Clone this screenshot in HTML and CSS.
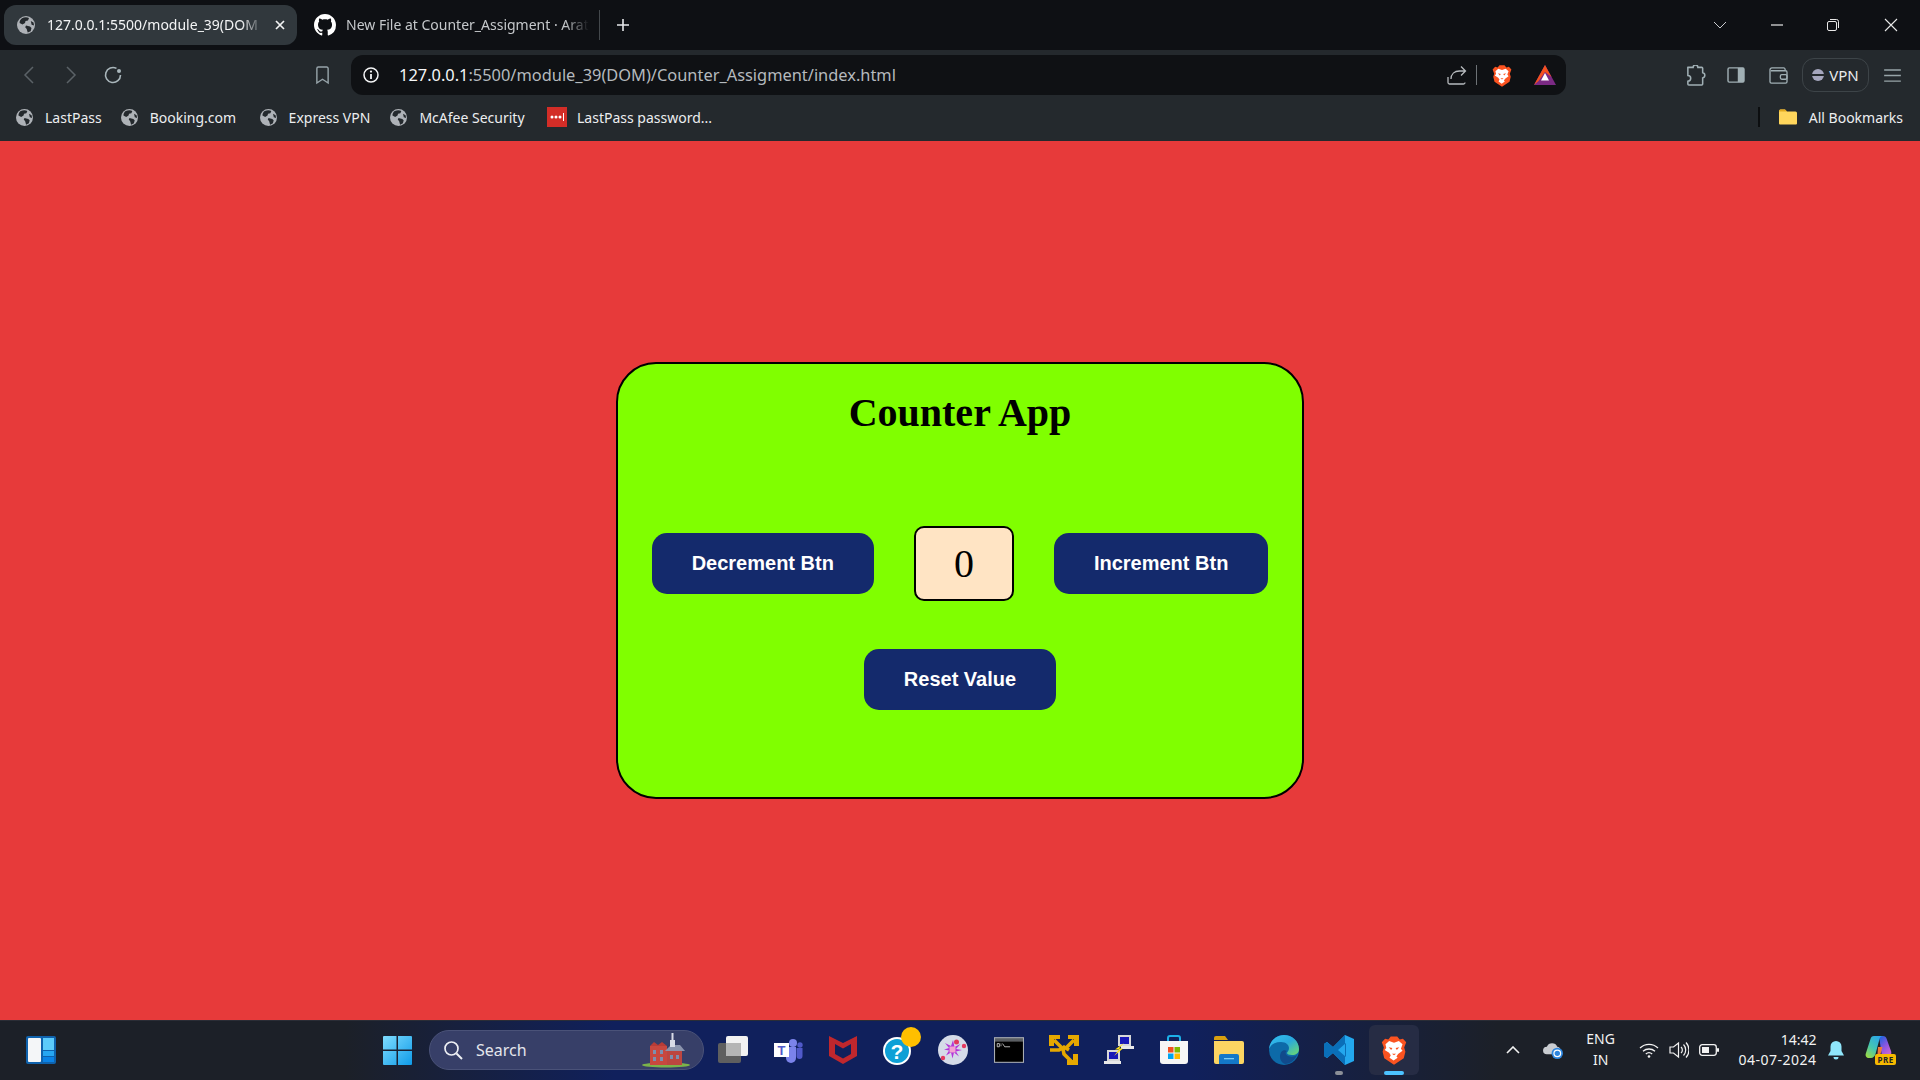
FILE: index.html
```html
<!DOCTYPE html>
<html lang="en">
<head>
<meta charset="utf-8">
<title>Counter App</title>
<link rel="stylesheet" href="styles.css">
</head>
<body>
<svg class="defs" width="0" height="0" aria-hidden="true">
  <symbol id="globe" viewBox="0 0 18 18">
    <circle cx="9" cy="9" r="9" fill="#aeb2b7"/>
    <path d="M5 2.2C7 1.2 10 1 12 2l-1 2.400-2.500.6-.5 2-2.500 1.500L2.600 7C2.500 5 3.500 3.200 5 2.200zM9 9.500l4 1 1.500 1.500-.8 3.200-3 1.400-1-3.600-1.500-1.800zM13.800 5l2.700 1.500.6 3-2.500-.8z" fill="#24292d"/>
  </symbol>
  <symbol id="brave" viewBox="0 0 32 36">
    <path d="M16 36 4 28 2 20 3.500 15 1 8.500 5 4 9 5 12 1.500h8L23 5l4-1 4 4.500L28.500 15 30 20l-2 8z" fill="#fb5320"/>
    <path d="M5.500 11 10 7l6 2 6-2 4.500 4-2 5.500 2 2.500-5.500 4-2 3 1.500 1.500-5 3.500-5-3.500L12 24.500l-2-3-5.500-3.500 2-2.500z" fill="#fff"/>
    <path d="M9.500 14.500l4.500 1-1.500 2.500zM22.500 14.500l-4.500 1 1.500 2.500zM13.500 22.500h5l-2.500 2z" fill="#fb5320"/>
  </symbol>
</svg>

<header class="browser">
  <div class="tabstrip">
    <div class="tab tab-active">
      <svg class="ic18"><use href="#globe"/></svg>
      <span class="tab-title">127.0.0.1:5500/module_39(DOM</span>
      <svg class="tab-close" viewBox="0 0 10 10"><path d="M1 1l8 8M9 1l-8 8" stroke="#f2f3f4" stroke-width="1.700" fill="none"/></svg>
    </div>
    <div class="tab tab-idle">
      <svg class="ic22" viewBox="0 0 16 16"><path fill="#fff" d="M8 0C3.580 0 0 3.580 0 8c0 3.540 2.290 6.530 5.470 7.590.4.070.55-.17.55-.38 0-.19-.01-.82-.01-1.490-2.010.37-2.530-.49-2.690-.94-.09-.23-.48-.94-.82-1.130-.28-.15-.68-.52-.01-.53.63-.01 1.080.58 1.230.82.720 1.210 1.870.870 2.330.66.070-.52.280-.870.510-1.070-1.780-.2-3.640-.89-3.640-3.950 0-.870.310-1.590.820-2.150-.08-.2-.36-1.020.08-2.120 0 0 .67-.21 2.200.82.640-.18 1.320-.27 2-.27s1.360.09 2 .27c1.530-1.040 2.200-.82 2.200-.82.440 1.100.160 1.920.080 2.120.51.560.820 1.270.820 2.150 0 3.070-1.870 3.750-3.650 3.950.290.250.540.730.540 1.480 0 1.070-.01 1.930-.01 2.200 0 .210.150.460.550.380A8.010 8.010 0 0 0 16 8c0-4.420-3.580-8-8-8z"/></svg>
      <span class="tab-title tab-title-dim">New File at Counter_Assigment · Arat</span>
    </div>
    <span class="tab-divider"></span>
    <svg class="newtab" viewBox="0 0 14 14"><path d="M7 1v12M1 7h12" stroke="#e6e8ea" stroke-width="1.600"/></svg>
    <span class="grow"></span>
    <div class="winctl">
      <svg viewBox="0 0 14 14" class="ic14 ctl-chevron"><path d="M1 4l6 6 6-6" stroke="#c9cccf" fill="none"/></svg>
      <svg viewBox="0 0 14 14" class="ic14 ctl-min"><path d="M1 7h12" stroke="#e8e8e8" stroke-width="1.200"/></svg>
      <svg viewBox="0 0 14 14" class="ic14 ctl-max"><rect x="1.500" y="3.500" width="9" height="9" rx="1.500" stroke="#e8e8e8" fill="none"/><path d="M4 1.500h6.500a2 2 0 0 1 2 2V10" stroke="#e8e8e8" fill="none"/></svg>
      <svg viewBox="0 0 14 14" class="ic14 ctl-close"><path d="M1 1l12 12M13 1L1 13" stroke="#e8e8e8" stroke-width="1.100"/></svg>
    </div>
  </div>

  <div class="toolbar">
    <svg class="tb tb-back" viewBox="0 0 12 20"><path d="M10 2 2 10l8 8" stroke="#5b6267" stroke-width="1.500" fill="none"/></svg>
    <svg class="tb tb-fwd" viewBox="0 0 12 20"><path d="M2 2l8 8-8 8" stroke="#5b6267" stroke-width="1.500" fill="none"/></svg>
    <svg class="tb tb-reload" viewBox="0 0 20 20"><path d="M17.500 10A7.500 7.500 0 1 1 13.500 3.400" stroke="#a9b6bb" stroke-width="1.600" fill="none"/><circle cx="16" cy="6" r="2" fill="#a9b6bb"/></svg>
    <svg class="tb tb-mark" viewBox="0 0 16 20"><path d="M2 2.500A1.500 1.500 0 0 1 3.500 1h9A1.500 1.500 0 0 1 14 2.500V18l-6-4-6 4z" stroke="#97a4aa" stroke-width="1.500" fill="none"/></svg>
    <div class="omnibox">
      <svg class="ic16 omni-info" viewBox="0 0 16 16"><circle cx="8" cy="8" r="7" stroke="#f4f5f6" stroke-width="1.500" fill="none"/><path d="M8 7v5" stroke="#f4f5f6" stroke-width="1.800"/><circle cx="8" cy="4.600" r="1.100" fill="#f4f5f6"/></svg>
      <span class="url"><b>127.0.0.1</b>:5500/module_39(DOM)/Counter_Assigment/index.html</span>
      <span class="grow"></span>
      <svg class="omni-share" viewBox="0 0 20 20"><path d="M1 12v5.500A1.500 1.500 0 0 0 2.500 19h14a1.500 1.500 0 0 0 1.500-1.500M4 14c0-5 3.500-8 8.500-8h5.500M14 1.500 18.500 6 14 10.500" stroke="#b7bbbe" stroke-width="1.300" fill="none"/></svg>
      <span class="omni-sep"></span>
      <svg class="omni-brave"><use href="#brave"/></svg>
      <svg class="omni-bat" viewBox="0 0 22 20"><path d="M11 0 22 20H0z" fill="#7b2a84"/><path d="M11 0 17.500 12 11 7 4.500 16 0 20z" fill="#f4511e"/><path d="M11 0 22 20l-4.500-8z" fill="#a21f7a"/><path d="M11 8l4 7.500H7z" fill="#fff"/></svg>
    </div>
    <svg class="tb-r tb-ext" viewBox="0 0 22 22"><path d="M3 2.500h5.500a2.500 2.500 0 0 1 5 0H17.500a1 1 0 0 1 1 1V8a2.800 2.800 0 0 1 0 5.500V20a1 1 0 0 1-1 1H4a1 1 0 0 1-1-1v-3a3 3 0 0 0 0-6V3.500a1 1 0 0 1 0-1z" stroke="#a0afb4" stroke-width="1.600" fill="none"/></svg>
    <svg class="tb-r tb-side" viewBox="0 0 20 18"><rect x="1" y="1" width="18" height="16" rx="1.500" stroke="#a0afb4" stroke-width="1.600" fill="none"/><rect x="12" y="1" width="7" height="16" fill="#a0afb4"/></svg>
    <svg class="tb-r tb-wallet" viewBox="0 0 20 18"><path d="M17 4V2.500A1.500 1.500 0 0 0 15.500 1H3a2 2 0 0 0-2 2v12.500A1.500 1.500 0 0 0 2.500 17h15a1.500 1.500 0 0 0 1.500-1.500v-10A1.500 1.500 0 0 0 17.500 4H2" stroke="#a0afb4" stroke-width="1.400" fill="none"/><rect x="12" y="8" width="7" height="5" rx="1.500" stroke="#a0afb4" stroke-width="1.400" fill="none"/></svg>
    <div class="vpn"><span class="vpn-dot"></span><span>VPN</span></div>
    <svg class="tb-r tb-menu" viewBox="0 0 18 14"><path d="M0 1h18M0 7h18M0 13h18" stroke="#97a4a8" stroke-width="1.500"/></svg>
  </div>

  <nav class="bookmarks">
    <a class="bm bm-a"><svg class="ic15"><use href="#globe"/></svg>LastPass</a>
    <a class="bm bm-b"><svg class="ic15"><use href="#globe"/></svg>Booking.com</a>
    <a class="bm bm-c"><svg class="ic15"><use href="#globe"/></svg>Express VPN</a>
    <a class="bm bm-d"><svg class="ic15"><use href="#globe"/></svg>McAfee Security</a>
    <a class="bm bm-e"><svg class="lp" viewBox="0 0 20 20"><rect width="20" height="20" fill="#d32d27"/><circle cx="5" cy="10" r="1.500" fill="#fff"/><circle cx="9" cy="10" r="1.500" fill="#fff"/><circle cx="13" cy="10" r="1.500" fill="#fff"/><rect x="16" y="6" width="1" height="8" fill="#fff"/></svg>LastPass password...</a>
    <span class="grow"></span>
    <span class="bm-sep"></span>
    <a class="bm bm-all"><svg class="folder" viewBox="0 0 20 16"><path d="M1 2a1.500 1.500 0 0 1 1.500-1.500H7L9 2.500h8.500A1.500 1.500 0 0 1 19 4v10.500a1 1 0 0 1-1 1H2a1 1 0 0 1-1-1z" fill="#ffd65c"/><path d="M1 2a1.500 1.500 0 0 1 1.500-1.500H7L9 2.500H1z" fill="#e3a91e"/></svg>All Bookmarks</a>
  </nav>
</header>

<main class="page">
  <section class="card">
    <h1 class="card-title">Counter App</h1>
    <div class="counter-row">
      <button class="btn">Decrement Btn</button>
      <div class="count">0</div>
      <button class="btn">Increment Btn</button>
    </div>
    <button class="btn btn-reset">Reset Value</button>
  </section>
</main>

<footer class="taskbar">
  <svg class="widgets" viewBox="0 0 30 28"><rect width="30" height="28" rx="2" fill="#0f62ad"/><rect x="2" y="2" width="13" height="24" rx="1" fill="#f4f6f8"/><rect x="17" y="2" width="11" height="12" fill="#5ccbfb"/><rect x="17" y="15" width="11" height="5" fill="#27a7f2"/><rect x="17" y="21" width="11" height="5" fill="#0b83e6"/></svg>
  <div class="tb-center">
    <svg class="winlogo" viewBox="0 0 29 29"><defs><linearGradient id="wg" x1="0" y1="0" x2="1" y2="1"><stop offset="0" stop-color="#7fdcff"/><stop offset="1" stop-color="#0f9be8"/></linearGradient></defs><path d="M0 1a1 1 0 0 1 1-1h12.500v13.500H0zM15 0h13a1 1 0 0 1 1 1v12.500H15zM0 15h13.500v14H1a1 1 0 0 1-1-1zM15 15h14v13a1 1 0 0 1-1 1H15z" fill="url(#wg)"/></svg>
    <div class="search">
      <svg class="search-ic" viewBox="0 0 20 20"><circle cx="8.500" cy="8.500" r="6.500" stroke="#eef0f4" stroke-width="1.700" fill="none"/><path d="M13.500 13.500 19 19" stroke="#eef0f4" stroke-width="1.900"/></svg>
      <span class="search-text">Search</span>
      <span class="grow"></span>
      <svg class="search-art" viewBox="0 0 50 36"><ellipse cx="25" cy="33" rx="24" ry="2.500" fill="#7bb34a"/><rect x="9" y="14" width="17" height="19" fill="#c8483f"/><path d="M9 14l4-4 4 3 4-3 5 4z" fill="#b83c36"/><rect x="26" y="19" width="15" height="14" fill="#bc4640"/><path d="M24 19l6-6h9l5 6z" fill="#8b94ad"/><rect x="29" y="8" width="5" height="7" fill="#d8dbe6"/><path d="M31.500 1v8" stroke="#d8dbe6" stroke-width="2"/><g fill="#7c8fb0"><rect x="12" y="18" width="3" height="4"/><rect x="19" y="18" width="3" height="4"/><rect x="12" y="25" width="3" height="4"/><rect x="19" y="25" width="3" height="4"/><rect x="29" y="23" width="3" height="4"/><rect x="35" y="23" width="3" height="4"/></g></svg>
    </div>
    <div class="apps">
      <div class="app"><svg class="i30" viewBox="0 0 30 30"><rect x="0" y="8" width="23" height="20" rx="2" fill="#5f5f5f"/><rect x="8" y="1" width="22" height="20" rx="2" fill="#f2f2f2"/><rect x="8" y="8" width="15" height="13" fill="#b5b5b5"/></svg></div>
      <div class="app"><svg class="i30" viewBox="0 0 30 30"><circle cx="20" cy="8" r="4" fill="#7b83eb"/><circle cx="27" cy="10" r="2.700" fill="#5059c9"/><path d="M13 12h10v11a5 5 0 0 1-10 0z" fill="#7b83eb"/><path d="M23.500 13h6v8a3 3 0 0 1-6 0z" fill="#5059c9"/><rect x="1" y="8" width="15" height="14" fill="#fff"/><text class="t-t" x="8.500" y="20">T</text></svg></div>
      <div class="app"><svg class="i30" viewBox="0 0 30 30"><path d="M1 1l14 7 14-7v20l-14 8-14-8zM7 9v10l8 4.500 8-4.500V9l-8 4.500z" fill="#c0272d" fill-rule="evenodd"/></svg></div>
      <div class="app"><svg class="i30" viewBox="0 0 30 30"><circle cx="14" cy="16" r="14" fill="#fff"/><circle cx="14" cy="16" r="12" fill="#0ea0d6"/><text class="t-q" x="14" y="24">?</text></svg><span class="badge"></span></div>
      <div class="app"><svg class="i30" viewBox="0 0 30 30"><ellipse cx="15" cy="15" rx="15" ry="15" fill="#d5dbe8"/><path d="M15 5l1.500 7 6-3-4.500 5 6 1-6 1.500 3 5-5-4-1.500 6-1.500-6-5 3 3-5-5-1 5-1.500-4-5 6 3z" fill="#b436d8"/><rect x="11.500" y="11.500" width="6" height="6" fill="#f3a2d2"/><circle cx="18.500" cy="7" r="2.500" fill="#e33a5f"/><circle cx="26" cy="11" r="2.200" fill="#e33a5f"/><circle cx="5" cy="23" r="2.200" fill="#e33a5f"/></svg></div>
      <div class="app"><svg class="i30" viewBox="0 0 28 24"><rect width="28" height="24" fill="#a9adb2"/><rect x="1" y="1" width="26" height="3" fill="#5a5e63"/><rect x="1" y="4" width="26" height="19" fill="#000"/><path d="M3 6h2v3H3zM6 6.500h1M6 8h1M8 6l2 3h5" stroke="#cfcfcf" stroke-width=".8" fill="none"/></svg></div>
      <div class="app"><svg class="i30" viewBox="0 0 30 30"><path d="M0 0h11v4H5v7H0zM19 0h11v11h-5V4h-6zM18 30h11V19h-5v6h-6z" fill="#e6a800"/><path d="M5 5l7 7M25 5l-7 7M1 15h9l5-3 5 3M14 14l1 5 8 8" stroke="#e6a800" stroke-width="3.600" fill="none"/></svg></div>
      <div class="app"><svg class="i30" viewBox="0 0 30 30"><rect x="14" y="0" width="13" height="11" fill="#d8d8d8"/><rect x="16" y="2" width="9" height="7" fill="#1818b8"/><rect x="17" y="11" width="13" height="3" fill="#e8e8e8"/><rect x="3" y="15" width="13" height="11" fill="#d8d8d8"/><rect x="5" y="17" width="9" height="7" fill="#1818b8"/><rect x="0" y="26" width="17" height="3" fill="#e8e8e8"/><path d="M20 8l-9 6.500h4L10 21l9-7.500h-4z" fill="#ffe11a"/></svg></div>
      <div class="app"><svg class="i30" viewBox="0 0 30 30"><path d="M9 6V3a2 2 0 0 1 2-2h8a2 2 0 0 1 2 2v3" stroke="#1cb0e8" stroke-width="2" fill="none"/><path d="M1 6h28v20a3 3 0 0 1-3 3H4a3 3 0 0 1-3-3z" fill="#f6f6f6"/><rect x="9" y="12" width="5.500" height="5.500" fill="#f25022"/><rect x="15.500" y="12" width="5.500" height="5.500" fill="#7fba00"/><rect x="9" y="18.500" width="5.500" height="5.500" fill="#00a4ef"/><rect x="15.500" y="18.500" width="5.500" height="5.500" fill="#ffb900"/></svg></div>
      <div class="app"><svg class="i30" viewBox="0 0 30 28"><path d="M0 2a2 2 0 0 1 2-2h9l3 4H0z" fill="#d9a00f"/><path d="M0 5h28a2 2 0 0 1 2 2v19a2 2 0 0 1-2 2H2a2 2 0 0 1-2-2z" fill="#fcd562"/><path d="M5 20a2 2 0 0 1 2-2h16a2 2 0 0 1 2 2v8H5z" fill="#1478c8"/><rect x="10" y="22" width="10" height="1.300" fill="#7ccdf5"/></svg></div>
      <div class="app"><svg class="i30" viewBox="0 0 30 30"><defs><linearGradient id="eg" x1="0" y1="0" x2="1" y2="1"><stop offset="0" stop-color="#35c1f1"/><stop offset=".5" stop-color="#2aa8dd"/><stop offset="1" stop-color="#6fdc6b"/></linearGradient></defs><circle cx="15" cy="15" r="15" fill="#0d6aa8"/><path d="M0 14C1 5 8 0 15 0c8 0 15 6 15 14 0 4-3 6-7 6-3 0-5-1-5-2 0-1 2-2 2-5 0-3-3-6-8-6C6 7 2 9 0 14z" fill="url(#eg)"/><path d="M11 22c0-5 3-8 7-6-2 1-2 3 1 5 3 1 6 1 9-1-2 5-7 9-12 9-3-1-5-4-5-7z" fill="#114a8b"/></svg></div>
      <div class="app app-dot"><svg class="i30" viewBox="0 0 30 30"><path d="M21 0l9 4v22l-9 4L9 18l-6 5-3-2v-12l3-2 6 5z" fill="#23a8ee"/><path d="M21 0 9 12 3 7 0 9v12l3 2 6-5 12 12zM22 8l-8 7 8 7z" fill="#0a6fb8" fill-rule="evenodd"/></svg></div>
      <div class="app app-active"><svg class="i30 brave-big"><use href="#brave"/></svg></div>
    </div>
  </div>
  <div class="tray">
    <svg class="tr tr-up" viewBox="0 0 14 8"><path d="M1 7l6-6 6 6" stroke="#f2f2f2" stroke-width="1.600" fill="none"/></svg>
    <svg class="tr tr-cloud" viewBox="0 0 22 20"><path d="M4 14a4 4 0 0 1 0-8 6 6 0 0 1 11 0 4 4 0 0 1 3 2v6z" fill="#c9ccd1"/><circle cx="15" cy="13" r="6" fill="#2d86e0"/><circle cx="15" cy="13" r="3.500" fill="none" stroke="#fff" stroke-width="1.300"/></svg>
    <div class="lang"><span>ENG</span><span>IN</span></div>
    <svg class="tr tr-wifi" viewBox="0 0 20 15"><path d="M1 5a13 13 0 0 1 18 0M4 8.300a9 9 0 0 1 12 0M6.800 11a5 5 0 0 1 6.400 0" stroke="#f2f2f2" stroke-width="1.300" fill="none"/><circle cx="10" cy="13.500" r="1.300" fill="#f2f2f2"/></svg>
    <svg class="tr tr-vol" viewBox="0 0 20 18"><path d="M1 6h3.500L9.500 2v14l-5-4H1z" stroke="#f2f2f2" stroke-width="1.200" fill="none"/><path d="M12 6a4 4 0 0 1 0 6M14.500 3.500a8 8 0 0 1 0 11M17 1.500a11 11 0 0 1 0 15" stroke="#f2f2f2" stroke-width="1.200" fill="none"/></svg>
    <svg class="tr tr-bat" viewBox="0 0 20 12"><rect x=".7" y=".7" width="16.600" height="10.600" rx="2.500" stroke="#f2f2f2" stroke-width="1.300" fill="none"/><rect x="3" y="3" width="7" height="6" fill="#f2f2f2"/><rect x="18" y="4" width="2" height="4" rx="1" fill="#f2f2f2"/></svg>
    <div class="clock"><span>14:42</span><span class="date">04-07-2024</span></div>
    <svg class="tr tr-bell" viewBox="0 0 16 19"><path d="M8 0a5.500 5.500 0 0 1 5.500 5.500V10l2.500 4.500H0L2.500 10V5.500A5.500 5.500 0 0 1 8 0zM5.500 16h5a2.500 2.500 0 0 1-5 0z" fill="#8fe6fb"/></svg>
    <div class="copilot">
      <svg class="cop" viewBox="0 0 28 24"><defs><linearGradient id="cga" x1="0.800" y1="0" x2="0.100" y2="1"><stop offset="0" stop-color="#2aa5ec"/><stop offset=".55" stop-color="#45c6b0"/><stop offset="1" stop-color="#9fdc3f"/></linearGradient><linearGradient id="cgb" x1="0.200" y1="0" x2="0.800" y2="1"><stop offset="0" stop-color="#2461dd"/><stop offset=".5" stop-color="#8f56e0"/><stop offset="1" stop-color="#d866d0"/></linearGradient></defs><path d="M14 1h4c2 0 3 1 3.500 2.500L26 16c1 3-.5 6-3 6H17z" fill="url(#cgb)"/><path d="M9 1h9c-2 0-3 1-3.500 3L10.500 19C10 21 8 23 6 23H4C1.500 23 0 21 .8 18.500L5.500 4C6 2 7 1 9 1z" fill="url(#cga)"/><path d="M13 12l4.500 0-2 7c-.5 2-2 4-4.500 4h-1c1.500-1 2-2 2.500-4z" fill="#ef7a3a"/></svg>
      <span class="pre">PRE</span>
    </div>
  </div>
</footer>
</body>
</html>
```
FILE: styles.css
```css
* { box-sizing: border-box; }
html, body { margin: 0; height: 100%; }
body {
  width: 1920px;
  height: 1080px;
  overflow: hidden;
  display: flex;
  flex-direction: column;
  background: #e73a3a;
  font-family: "Noto Sans", "Liberation Sans", sans-serif;
}
.defs { position: absolute; }
.grow { flex: 1; }
svg { display: block; flex: none; }

/* Browser chrome */
.browser { flex: none; color: #e8eaec; }
.tabstrip {
  height: 50px;
  display: flex;
  align-items: center;
  padding-left: 4px;
  background: #0e1014;
}
.tab { display: flex; align-items: center; height: 40px; overflow: hidden; font-size: 14px; }
.tab-active { width: 293px; padding: 0 12px 0 13px; background: #31383d; border-radius: 12px; color: #f3f4f5; }
.tab-idle { width: 302px; padding: 0 10px 0 17px; color: #c5c8cb; }
.ic18 { width: 18px; height: 18px; }
.ic22 { width: 22px; height: 22px; }
.ic14 { width: 14px; height: 14px; }
.ic16 { width: 16px; height: 16px; }
.ic15 { width: 17px; height: 17px; }
.tab-title {
  flex: 1;
  margin-left: 12px;
  padding-bottom: 2px;
  white-space: nowrap;
  overflow: hidden;
  -webkit-mask-image: linear-gradient(90deg, #000 90%, transparent 100%);
  mask-image: linear-gradient(90deg, #000 90%, transparent 100%);
}
.tab-title-dim { margin-left: 10px; }
.tab-close { width: 10px; height: 10px; margin-left: 12px; flex: none; }
.tab-divider { width: 1px; height: 30px; background: #43484c; }
.newtab { width: 14px; height: 14px; margin-left: 16px; }
.winctl { display: flex; align-items: center; padding-right: 22px; }
.ctl-min { margin-left: 43px; }
.ctl-max { margin-left: 42px; }
.ctl-close { margin-left: 44px; }

.toolbar { height: 50px; display: flex; align-items: center; background: #24292d; }
.tb-back { width: 12px; height: 20px; margin-left: 23px; }
.tb-fwd { width: 12px; height: 20px; margin-left: 30px; }
.tb-reload { width: 20px; height: 20px; margin-left: 26px; }
.tb-mark { width: 15px; height: 19px; margin-left: 192px; }
.omnibox {
  width: 1215px;
  height: 40px;
  margin-left: 21px;
  display: flex;
  align-items: center;
  padding: 0 10px 0 12px;
  background: #0f1114;
  border-radius: 12px;
}
.url { margin-left: 20px; padding-bottom: 2px; font-size: 16.400px; color: #b5babe; white-space: nowrap; }
.url b { font-weight: 400; color: #f6f7f8; }
.omni-share { width: 20px; height: 20px; }
.omni-sep { width: 1px; height: 20px; margin-left: 9.500px; background: #6d7276; }
.omni-brave { width: 20px; height: 23px; margin-left: 15px; }
.omni-bat { width: 22px; height: 20px; margin-left: 22px; }
.tb-ext { width: 21px; height: 21px; margin-left: 119px; }
.tb-side { width: 18px; height: 16px; margin-left: 21px; }
.tb-wallet { width: 19px; height: 17px; margin-left: 24px; }
.vpn {
  width: 67px;
  height: 34px;
  margin-left: 14px;
  display: flex;
  align-items: center;
  justify-content: center;
  gap: 5px;
  border: 1px solid #3d4448;
  border-radius: 12px;
  font-size: 15px;
  color: #e9ebec;
}
.vpn-dot { width: 12px; height: 12px; border-radius: 50%; background: linear-gradient(#a5a6bd 0 40%, #24292d 40% 60%, #a5a6bd 60%); }
.tb-menu { width: 17px; height: 13px; margin-left: 15px; }

.bookmarks { height: 41px; display: flex; align-items: center; background: #24292d; font-size: 14px; padding: 0 17px 7px 0; }
.bm { display: flex; align-items: center; gap: 12px; white-space: nowrap; color: #eceef0; }
.bm-a { margin-left: 16px; }
.bm-b { margin-left: 19px; }
.bm-c { margin-left: 23.500px; }
.bm-d { margin-left: 20px; }
.bm-e { margin-left: 22.500px; gap: 10px; }
.lp { width: 20px; height: 20px; }
.bm-sep { width: 2px; height: 20px; background: #0c0e10; margin-right: 18px; }
.bm-all { gap: 11px; }
.folder { width: 20px; height: 16px; }

/* Page */
.page { flex: 1; display: flex; align-items: center; justify-content: center; min-height: 0; }
.card {
  width: 688px;
  height: 437px;
  padding-top: 26px;
  display: flex;
  flex-direction: column;
  align-items: center;
  background: #80ff00;
  border: 2px solid #000;
  border-radius: 40px;
  font-family: "Liberation Serif", serif;
}
.card-title { margin: 0; font-size: 40px; font-weight: 700; line-height: 46px; color: #000; }
.counter-row { margin-top: 90px; display: flex; align-items: center; gap: 40px; }
.btn {
  padding: 19px 40px;
  font-family: "Liberation Sans", sans-serif;
  font-size: 20px;
  font-weight: 700;
  line-height: 23px;
  color: #fff;
  background: #142a6c;
  border: 0;
  border-radius: 15px;
}
.btn-reset { margin-top: 48px; }
.count {
  width: 100px;
  height: 75px;
  display: flex;
  align-items: center;
  justify-content: center;
  font-size: 40px;
  background: #ffe4c4;
  border: 2px solid #000;
  border-radius: 10px;
}

/* Taskbar */
.taskbar {
  flex: none;
  height: 60px;
  display: flex;
  align-items: center;
  padding: 0 0 1px 26px;
  border-top: 1px solid #2a2d36;
  background: linear-gradient(90deg, #1c2028 0 18%, #10205c 32% 62%, #1c2028 78%);
  color: #f2f2f2;
}
.widgets { width: 30px; height: 28px; }
.tb-center { display: flex; align-items: center; margin-left: 327px; }
.winlogo { width: 29px; height: 29px; }
.search {
  width: 275px;
  height: 40px;
  margin-left: 17px;
  display: flex;
  align-items: center;
  padding: 0 12px 0 13px;
  background: #373f68;
  border: 1px solid #4a5278;
  border-radius: 20px;
  font-size: 16px;
  color: #e4e6ec;
}
.search-ic { width: 20px; height: 20px; }
.search-text { margin-left: 13px; }
.search-art { width: 50px; height: 36px; }
.apps { display: flex; align-items: center; margin-left: 1.500px; }
.app { position: relative; width: 55.100px; height: 50px; display: flex; align-items: center; justify-content: center; border-radius: 6px; }
.i30 { width: 30px; height: 30px; }
.app-dot::after {
  content: "";
  position: absolute;
  left: 23px;
  bottom: 0;
  width: 8px;
  height: 4px;
  border-radius: 2px;
  background: #8b8f98;
}
.app-active { width: 50px; margin-left: 2.500px; background: #262c44; }
.app-active::after {
  content: "";
  position: absolute;
  left: 15px;
  bottom: 0;
  width: 20px;
  height: 4px;
  border-radius: 2px;
  background: #4cc2ff;
}
.brave-big { width: 26px; height: 30px; }
.badge { position: absolute; left: 30px; top: 2px; width: 20px; height: 20px; border-radius: 50%; background: #ffbf00; }
.t-t { font: 700 13px "Liberation Sans", sans-serif; fill: #5059c9; text-anchor: middle; }
.t-q { font: 700 21px "Liberation Sans", sans-serif; fill: #fff; text-anchor: middle; }

.tray { display: flex; align-items: center; margin-left: 86.500px; }
.tr { flex: none; }
.tr-up { width: 14px; height: 8px; }
.tr-cloud { width: 21px; height: 19px; margin-left: 23px; }
.lang { width: 40px; margin-left: 17px; padding-bottom: 2px; display: flex; flex-direction: column; align-items: center; font-size: 14px; line-height: 21px; }
.tr-wifi { width: 20px; height: 15px; margin-left: 18px; }
.tr-vol { width: 20px; height: 18px; margin-left: 10px; }
.tr-bat { width: 20px; height: 12px; margin-left: 10px; }
.clock { width: 90px; margin-left: 8px; display: flex; flex-direction: column; align-items: flex-end; font-size: 14px; line-height: 20px; }
.date { letter-spacing: .5px; }
.tr-bell { width: 16px; height: 19px; margin-left: 11px; }
.copilot { position: relative; width: 30px; height: 30px; margin-left: 21px; }
.cop { width: 28px; height: 24px; }
.pre {
  position: absolute;
  right: -1px;
  bottom: 0;
  padding: 0 2px;
  font: 700 8px/11px "Noto Sans", sans-serif;
  letter-spacing: .5px;
  color: #1c2028;
  background: #f6b900;
  border-radius: 2px;
}
```
